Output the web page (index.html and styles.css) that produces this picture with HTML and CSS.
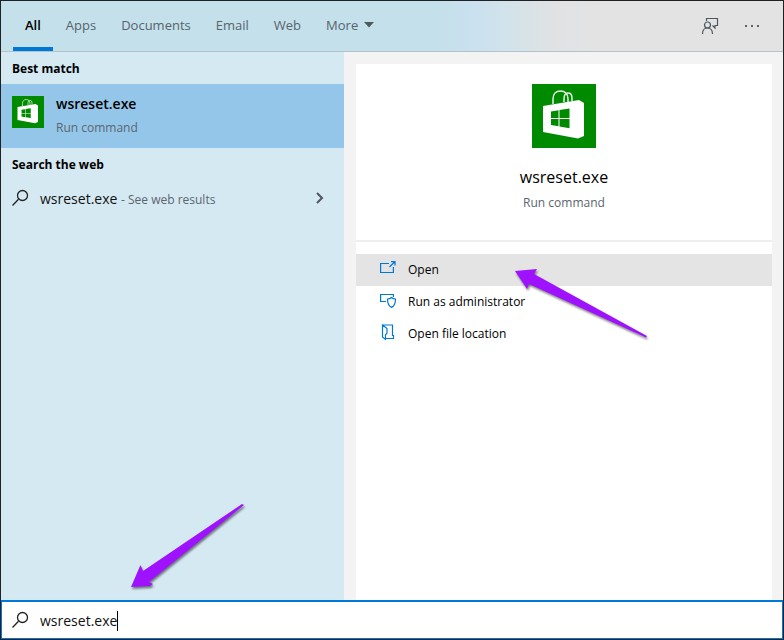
FILE: index.html
```html
<!DOCTYPE html>
<html lang="en">
<head>
  <meta charset="UTF-8">
  <meta name="viewport" content="width=device-width, initial-scale=1.0">
  <title>Search</title>
  <link rel="stylesheet" href="styles.css">
</head>
<body>
  <!-- Shared icons -->
  <svg class="defs" aria-hidden="true">
    <symbol id="store" viewBox="0 0 64 64">
      <rect width="64" height="64" fill="#008a00"/>
      <path d="M21 20v-5c0-5 3-8 7.500-8s7.500 3 7.500 8v3M32 18v-3c0-4 1-6 4-6s4 2 4 5v3" fill="none" stroke="#e3f3e3" stroke-width="1.500"/>
      <path d="M11 22l36-6 5 3v33l-6 2.500-35-6.500z" fill="#fff"/>
      <path d="M19 27.500l7.500-1.200V34H19zM27.500 26.100l10-1.600V34h-10zM19 35h7.500v7.300L19 41zM27.500 35h10v9.200l-10-1.700z" fill="#008a00"/>
    </symbol>
    <symbol id="search" viewBox="0 0 18 18">
      <path d="M.500 16.500l6-6.200" fill="none" stroke="#222" stroke-width="1.300"/>
      <circle cx="10.500" cy="6.500" r="5" fill="none" stroke="#222" stroke-width="1.300"/>
    </symbol>
  </svg>

  <div class="window">
    <header class="topbar">
      <nav class="tabs">
        <button class="tab active">All</button>
        <button class="tab">Apps</button>
        <button class="tab">Documents</button>
        <button class="tab">Email</button>
        <button class="tab">Web</button>
        <button class="tab">More <svg class="caret-down" viewBox="0 0 10 6"><path d="M0 0h10L5 5.500z" fill="#4d5a60"/></svg></button>
      </nav>
      <div class="tools">
        <button class="tool" aria-label="Feedback">
          <svg width="18" height="18" viewBox="0 0 18 18" fill="none" stroke="#4c5560" stroke-width="1.200">
            <path d="M5.500 4V1.500h11v7H14v2.500L11.500 8.500"/>
            <circle cx="6.500" cy="8" r="3"/>
            <path d="M1.500 17c0-4 2-6 5-6s5 2 5 6"/>
          </svg>
        </button>
        <button class="tool" aria-label="Options">
          <svg width="16" height="4" viewBox="0 0 16 4" fill="#5c6272"><path d="M1 1h2v2H1zM7 1h2v2H7zM13 1h2v2h-2z"/></svg>
        </button>
      </div>
    </header>

    <main class="content">
      <section class="results">
        <h2>Best match</h2>
        <button class="best">
          <svg class="best-icon"><use href="#store"/></svg>
          <span class="best-text">
            <span class="best-name">wsreset.exe</span>
            <span class="sub">Run command</span>
          </span>
        </button>
        <h2>Search the web</h2>
        <button class="web">
          <svg class="glass"><use href="#search"/></svg>
          <span class="web-text">wsreset.exe <span class="sub">- See web results</span></span>
          <svg class="chevron" viewBox="0 0 8 12"><path d="M1 1l5 5-5 5" fill="none" stroke="#50555f" stroke-width="2"/></svg>
        </button>
        <svg class="arrow arrow-search" viewBox="0 0 116 88" aria-hidden="true">
          <path d="M1 84L10.500 62l2.500 6L112 1l2 1L19 79l4 2-3 2z" fill="#9f12ff"/>
        </svg>
      </section>

      <section class="details">
        <div class="card">
          <svg class="card-icon"><use href="#store"/></svg>
          <h1>wsreset.exe</h1>
          <p class="sub">Run command</p>
        </div>
        <div class="actions">
          <button class="action selected">
            <svg viewBox="0 0 16 16" fill="none" stroke="#0078d7" stroke-width="1.200"><path d="M9 3.500H.600v9h12.800V7M9.500 7l5-5M11 1.600h4v4"/></svg>
            Open
          </button>
          <button class="action">
            <svg viewBox="0 0 16 16" fill="none" stroke="#0078d7" stroke-width="1.200"><path d="M6 9.500H.600v-7h12.800V5M11.500 5.500c1 1 2.500 1.500 4 1.500 0 4.500-1 7-4 8.400-3-1.400-4-3.900-4-8.400 1.500 0 3-.500 4-1.500z"/></svg>
            Run as administrator
          </button>
          <button class="action">
            <svg viewBox="0 0 16 16" fill="none" stroke="#0078d7" stroke-width="1.200"><path d="M2.500 1h10v10.500h1v3H6M2.500 1v12l3 2.400V11l1.500-2V4.500z"/></svg>
            Open file location
          </button>
          <svg class="arrow arrow-open" viewBox="0 0 136 74" aria-hidden="true">
            <path d="M1 2l22-2-3 5 113 62-1 1.500L15 15l-2 5z" fill="#9f12ff"/>
          </svg>
        </div>
      </section>
    </main>

    <label class="searchbar">
      <svg class="glass"><use href="#search"/></svg>
      <input class="query" type="text" value="wsreset.exe" size="9" aria-label="Search">
      <span class="cursor"></span>
    </label>
  </div>
</body>
</html>
```
FILE: styles.css
```css
* {
  box-sizing: border-box;
}

body {
  margin: 0;
  font-family: "Open Sans", "Noto Sans", sans-serif;
  font-size: 13px;
  line-height: 20px;
  color: #111;
}

button {
  border: none;
  background: none;
  padding: 0;
  font: inherit;
  color: inherit;
  text-align: left;
}

h1, h2, p {
  margin: 0;
}

.defs {
  position: absolute;
  width: 0;
  height: 0;
}

.sub {
  font-size: 12px;
  color: #5a666f;
}

.window {
  display: flex;
  flex-direction: column;
  min-height: 100vh;
  border: 1px solid #202124;
}

/* Top bar */
.topbar {
  display: flex;
  justify-content: space-between;
  height: 51px;
  padding: 0 23px 0 12px;
  border-bottom: 1px solid #b3c2ca;
  background: linear-gradient(to right, #c4e0eb 56%, #cbe1ef 61%, #d2e3ea 65%, #dfe2e4 70%, #e3e3e3 76%);
}

.tabs {
  display: flex;
  gap: 1px;
}

.tab {
  padding: 2px 12px 0;
  border-bottom: 4px solid transparent;
  color: #56646c;
}

.tab.active {
  border-color: #0078d7;
  color: #000;
  font-weight: 600;
}

.caret-down {
  width: 10px;
  height: 6px;
  margin: 0 0 2px 2px;
}

.tools {
  display: flex;
  align-items: center;
  gap: 25px;
}

.tool {
  display: flex;
}

/* Columns */
.content {
  display: flex;
  flex: 1;
}

.results {
  position: relative;
  width: 343px;
  background: #d5e9f2;
}

h2 {
  padding: 7px 11px 5px;
  font-size: 12px;
  font-weight: 700;
  line-height: 20px;
  color: #000;
}

.best {
  display: flex;
  align-items: center;
  gap: 12px;
  width: 100%;
  height: 64px;
  padding: 0 11px;
  background: #94c6ea;
}

.best-icon {
  width: 32px;
  height: 32px;
  margin-bottom: 8px;
}

.best-text {
  display: flex;
  flex-direction: column;
  gap: 4px;
}

.best-name {
  font-size: 14px;
  font-weight: 600;
  color: #000;
}

.web {
  display: flex;
  align-items: center;
  gap: 10px;
  width: 100%;
  height: 38px;
  padding: 0 20px 0 11px;
}

.glass {
  width: 18px;
  height: 18px;
  margin-bottom: 2px;
}

.web-text {
  flex: 1;
  font-size: 14px;
}

.chevron {
  width: 8px;
  height: 12px;
  margin-bottom: 2px;
}

.details {
  display: flex;
  flex: 1;
  flex-direction: column;
  padding: 12px 11px 0 12px;
  background: #f3f3f3;
}

.card {
  display: flex;
  flex-direction: column;
  align-items: center;
  height: 178px;
  padding-top: 20px;
  border-bottom: 2px solid #eee;
  background: #fff;
}

.card-icon {
  width: 64px;
  height: 64px;
}

h1 {
  margin: 18px 0 5px;
  font-size: 16px;
  font-weight: 400;
  line-height: 22px;
  color: #000;
}

.actions {
  position: relative;
  flex: 1;
  padding-top: 12px;
  background: #fff;
}

.action {
  display: flex;
  align-items: center;
  gap: 12px;
  width: 100%;
  height: 32px;
  padding-left: 24px;
  font-size: 12px;
  color: #000;
}

.action svg {
  width: 16px;
  height: 16px;
  margin-bottom: 4px;
}

.action.selected {
  background: #e4e4e4;
}

/* Pointer arrows */
.arrow {
  position: absolute;
  pointer-events: none;
  filter: drop-shadow(1px 2px 1px rgba(0, 0, 0, 0.5));
}

.arrow-search {
  left: 129px;
  bottom: 9px;
  width: 116px;
  height: 88px;
}

.arrow-open {
  left: 158px;
  top: 27px;
  width: 136px;
  height: 74px;
}

/* Search box */
.searchbar {
  display: flex;
  align-items: center;
  height: 39px;
  padding: 2px 10px 0;
  border: 1px solid #0078d7;
  border-top-width: 2px;
  background: #fff;
}

.query {
  field-sizing: content;
  margin-left: 10px;
  padding: 0;
  border: none;
  outline: none;
  background: none;
  font: inherit;
  font-size: 14px;
  color: #111;
}

.cursor {
  width: 1px;
  height: 20px;
  background: #000;
}
```
